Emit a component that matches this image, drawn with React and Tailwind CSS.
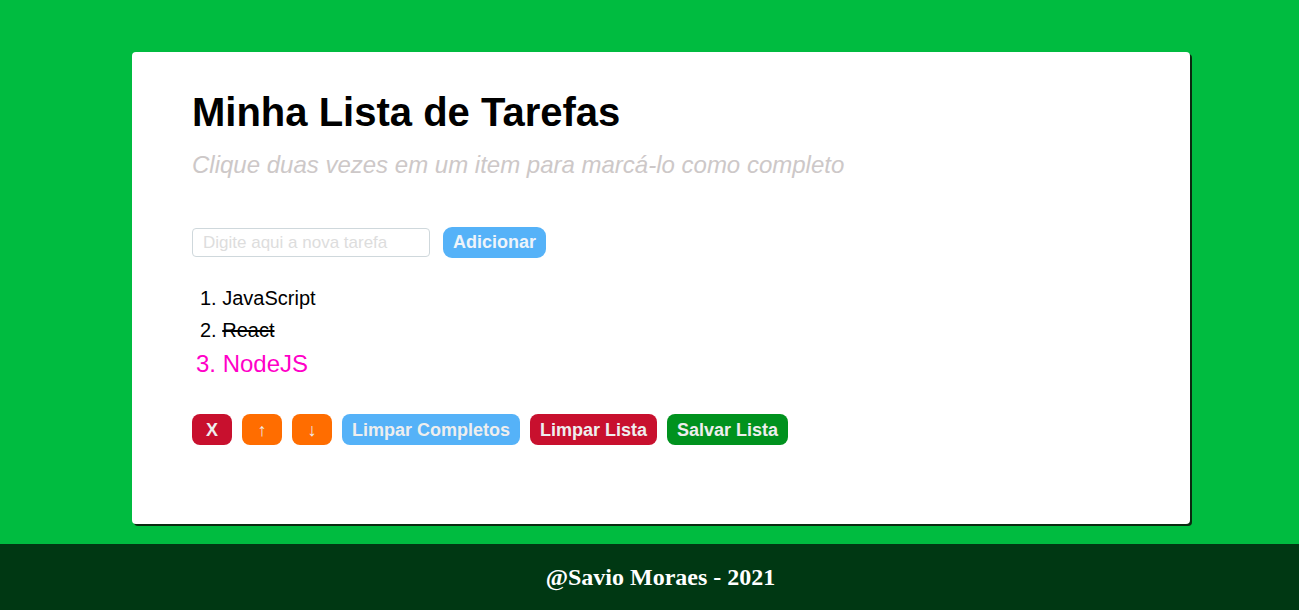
import React, { useState } from 'react';

const initialTasks = [
  { text: 'JavaScript', done: false },
  { text: 'React', done: true },
  { text: 'NodeJS', done: false },
];

const btn = 'h-[31px] rounded-[8px] px-[10px] font-bold text-[18px] text-[#eeeeee] leading-none';

export default function App() {
  const [tasks] = useState(initialTasks);
  const selected = 2;

  return (
    <div className="min-h-[610px] flex flex-col bg-[#00bc40] font-['Liberation_Sans',Arial,sans-serif]">
      <div className="pt-[52px] pb-[20px] pl-[132px]">
        <div className="w-[1058px] h-[472px] bg-white rounded-[4px] shadow-[2px_2px_0_#0a2a10] px-[60px] pt-[36px]">
          <h1 className="text-[40px] font-bold text-black leading-[48px]">Minha Lista de Tarefas</h1>
          <p className="mt-[14px] text-[24px] italic text-[#cdc8c8] leading-[30px]">
            Clique duas vezes em um item para marcá-lo como completo
          </p>

          <div className="mt-[47px] flex items-center gap-[13px]">
            <input
              type="text"
              placeholder="Digite aqui a nova tarefa"
              className="w-[238px] h-[29px] border border-[#cfd8dc] rounded-[4px] px-[10px] text-[17px] placeholder:text-[#dddddd] outline-none"
            />
            <button className="h-[31px] rounded-[9px] px-[10px] bg-[#55b2f8] font-bold text-[18px] text-[#eef4fa]">
              Adicionar
            </button>
          </div>

          <ol className="mt-[24px] list-decimal list-inside">
            {tasks.map((t, i) => (
              <li
                key={t.text}
                className={
                  i === selected
                    ? 'text-[24px] text-[#ff00c8] leading-[36px] ml-[4px]'
                    : 'text-[20px] text-black leading-[32px] ml-[8px]'
                }
              >
                <span className={t.done ? 'line-through' : ''}>{t.text}</span>
              </li>
            ))}
          </ol>

          <div className="mt-[32px] flex gap-[10px]">
            <button className={`${btn} w-[40px] px-0 bg-[#c8102e]`}>X</button>
            <button className={`${btn} w-[40px] px-0 bg-[#ff6d00]`}>↑</button>
            <button className={`${btn} w-[40px] px-0 bg-[#ff6d00]`}>↓</button>
            <button className={`${btn} bg-[#55b2f8]`}>Limpar Completos</button>
            <button className={`${btn} bg-[#c8102e]`}>Limpar Lista</button>
            <button className={`${btn} bg-[#00921e]`}>Salvar Lista</button>
          </div>
        </div>
      </div>
      <footer className="h-[66px] bg-[#003813] flex items-center justify-center pl-[22px]">
        <span className="font-['Liberation_Serif',serif] font-bold text-[24px] text-white">@Savio Moraes - 2021</span>
      </footer>
    </div>
  );
}
